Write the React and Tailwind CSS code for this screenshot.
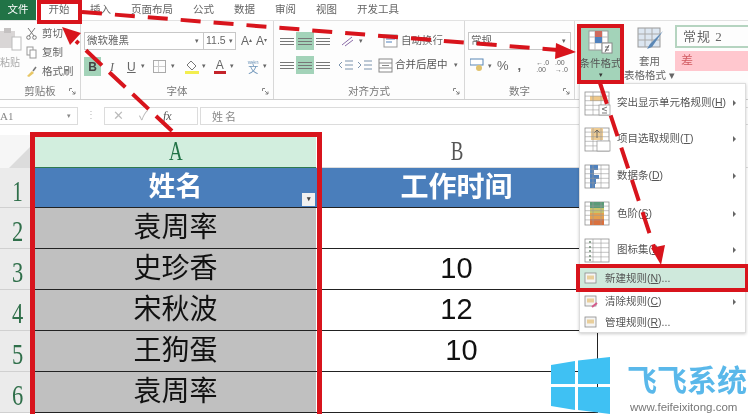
import React from 'react'

const tabs = ['插入', '页面布局', '公式', '数据', '审阅', '视图', '开发工具']

const rows = [
  { n: '2', name: '袁周率', time: '' },
  { n: '3', name: '史珍香', time: '10' },
  { n: '4', name: '宋秋波', time: '12' },
  { n: '5', name: '王狗蛋', time: '10', shift: true },
  { n: '6', name: '袁周率', time: '' },
]

const menuItems = [
  { label: '突出显示单元格规则(', key: 'H', type: 'rule', h: 'h-[36px]' },
  { label: '项目选取规则(', key: 'T', type: 'top', h: 'h-[36px]' },
  { label: '数据条(', key: 'D', type: 'bars', h: 'h-[38px]' },
  { label: '色阶(', key: 'S', type: 'scale', h: 'h-[37px]' },
  { label: '图标集(', key: 'I', type: 'icons', h: 'h-[36px]' },
]

const Lines = ({ w = 14, active }) => (
  <span className={`flex flex-col justify-center gap-[2px] w-[18px] h-[18px] items-center ${active ? 'bg-[#a3d3b9]' : ''}`}>
    <span className="h-px bg-[#777]" style={{ width: w }} />
    <span className="h-px bg-[#777]" style={{ width: w }} />
    <span className="h-px bg-[#777]" style={{ width: w }} />
  </span>
)

const Launcher = () => (
  <svg width="7" height="7" viewBox="0 0 7 7" className="absolute right-[4px] bottom-[4px]">
    <path d="M0.5 3V0.5H3M3 3l3 3M6 3.5V6H3.5" fill="none" stroke="#777" strokeWidth="0.9" />
  </svg>
)

const Group = ({ width, label, children }) => (
  <div className={`relative flex flex-col border-r border-[#d8d8d8] ${width}`}>
    <div className="flex-1 min-h-0">{children}</div>
    <div className="h-[17px] text-center text-[10.5px] leading-[19px] text-[#777]">{label}</div>
  </div>
)

const MiniIcon = ({ type }) => {
  const cells = []
  for (let i = 1; i < 5; i++) cells.push(<path key={'h' + i} d={`M1 ${i * 4.6 + 0.5}H25`} stroke="#9a9a9a" strokeWidth="0.6" />)
  for (let i = 1; i < 3; i++) cells.push(<path key={'v' + i} d={`M${i * 8 + 1} 1V24`} stroke="#9a9a9a" strokeWidth="0.6" />)
  return (
    <svg width="27" height="25" viewBox="0 0 27 25">
      <rect x="1" y="1" width="24" height="23" fill="#fff" stroke="#8f8f8f" strokeWidth="0.8" />
      {type === 'rule' && <rect x="6" y="5" width="13" height="5" fill="#f0c98a" />}
      {type === 'top' && <rect x="7" y="1" width="12" height="12" fill="#eecb93" />}
      {type === 'bars' && (
        <>
          <rect x="6" y="1" width="8" height="5" fill="#4f81bd" />
          <rect x="6" y="6" width="4" height="5" fill="#4f81bd" />
          <rect x="6" y="11" width="9" height="4" fill="#4f81bd" />
          <rect x="6" y="15" width="6" height="5" fill="#4f81bd" />
          <rect x="6" y="20" width="5" height="4" fill="#4f81bd" />
        </>
      )}
      {type === 'scale' && (
        <>
          <rect x="6" y="1" width="14" height="6" fill="#5b9a78" />
          <rect x="6" y="7" width="14" height="5" fill="#c9c46a" />
          <rect x="6" y="12" width="14" height="6" fill="#e5a04e" />
          <rect x="6" y="18" width="14" height="6" fill="#d9713f" />
        </>
      )}
      {cells}
      {type === 'icons' && [4, 9, 13, 18, 22].map((y) => <circle key={y} cx="6" cy={y} r="1" fill="#6c8a72" />)}
      {type === 'rule' && (
        <>
          <rect x="15" y="14" width="11" height="10" fill="#fff" stroke="#8f8f8f" strokeWidth="0.7" />
          <path d="M23 16l-5 2 5 2M18 22h5" fill="none" stroke="#555" strokeWidth="0.8" />
        </>
      )}
      {type === 'top' && (
        <>
          <path d="M13 11V3M10.500 5.500L13 3l2.500 2.500" fill="none" stroke="#555" strokeWidth="0.8" />
          <rect x="13" y="14" width="13" height="10" fill="#fff" stroke="#8f8f8f" strokeWidth="0.7" />
        </>
      )}
    </svg>
  )
}

const SmallRule = ({ pen }) => (
  <svg width="14" height="13" viewBox="0 0 14 13">
    <rect x="1" y="1" width="11" height="10" fill="#f5f5f5" stroke="#8a8a8a" strokeWidth="0.8" />
    <rect x="3" y="3.5" width="7" height="4" fill="#e9cf9c" />
    {pen && <path d="M8 12l5-4" stroke="#d55a8a" strokeWidth="2" />}
  </svg>
)

const MenuItem = ({ item }) => (
  <div className={`flex items-center pl-[4px] pr-[9px] ${item.h}`}>
    <MiniIcon type={item.type} />
    <span className="ml-[6px] flex-1 text-[10.5px] text-[#555]">
      {item.label}<span className="underline">{item.key}</span>)
    </span>
    <span className="w-0 h-0 border-y-[3px] border-y-transparent border-l-[3px] border-l-[#666]" />
  </div>
)

const App = () => {
  return (
    <div className="relative w-[748px] h-[414px] overflow-hidden bg-white blur-[0.3px] font-['Liberation_Sans','Noto_Sans_CJK_SC',sans-serif]">
      {/* Tabs */}
      <div className="flex h-[21px] items-center border-b border-[#e2e2e2] text-[10.5px] text-[#666]">
        <div className="flex h-full w-[36px] items-center justify-center bg-[#217346] text-white">文件</div>
        <div className="w-[46px] text-center">开始</div>
        <div className="ml-[8px] flex gap-[20px]">
          {tabs.map((t) => <span key={t}>{t}</span>)}
        </div>
      </div>

      {/* Ribbon */}
      <div className="flex h-[79px] border-b border-[#cfcfcf] bg-[#fdfdfd] text-[#666]">
        <Group width="w-[81px]" label="剪贴板">
          <div className="flex pt-[4px]">
            <div className="w-[26px] text-[10px] text-[#aaa]">
              <svg width="22" height="25" viewBox="0 0 22 25" className="mt-[2px]">
                <rect x="0" y="4" width="15" height="17" fill="#d9d6d6" />
                <rect x="4" y="1" width="7" height="5" fill="#c4c1c1" />
                <rect x="12" y="10" width="9" height="13" fill="#fff" stroke="#bbb" />
              </svg>
              <div className="mt-[3px] whitespace-nowrap">粘贴</div>
            </div>
            <div className="flex flex-col gap-[3px] pt-[1px] text-[10.5px]">
              <div className="flex items-center gap-[5px]">
                <svg width="11" height="13" viewBox="0 0 11 13"><path d="M2 1l6 8M9 1L3 9" stroke="#777" fill="none" /><circle cx="2.5" cy="10.5" r="1.8" fill="none" stroke="#777" /><circle cx="8.5" cy="10.5" r="1.8" fill="none" stroke="#777" /></svg>
                <span>剪切</span>
              </div>
              <div className="flex items-center gap-[5px]">
                <svg width="11" height="13" viewBox="0 0 11 13"><rect x="1" y="1" width="6" height="8" fill="#fff" stroke="#999" /><rect x="4" y="4" width="6" height="8" fill="#fff" stroke="#999" /></svg>
                <span>复制</span>
              </div>
              <div className="flex items-center gap-[5px]">
                <svg width="11" height="13" viewBox="0 0 11 13"><path d="M1 11l5-5 2 2-5 4z" fill="#e8c766" /><path d="M7 6l3-4" stroke="#777" strokeWidth="1.5" /></svg>
                <span className="whitespace-nowrap">格式刷</span>
              </div>
            </div>
          </div>
          <Launcher />
        </Group>

        <Group width="w-[193px]" label="字体">
          <div className="flex items-center pl-[3px] pt-[11px]">
            <div className="flex h-[18px] w-[120px] items-center justify-between border border-[#c8c8c8] bg-white pl-[2px] pr-[4px] text-[10.5px]">
              <span>微软雅黑</span>
              <span className="text-[7px]">▾</span>
            </div>
            <div className="flex h-[18px] w-[32px] items-center justify-between border border-l-0 border-[#c8c8c8] bg-white px-[2px] text-[10.5px]">
              <span>11.5</span>
              <span className="text-[7px]">▾</span>
            </div>
            <span className="ml-[5px] text-[12px]">A<sup className="text-[6px]">▴</sup></span>
            <span className="ml-[4px] text-[12px]">A<sup className="text-[6px]">▾</sup></span>
          </div>
          <div className="flex items-center pl-[3px] pt-[7px] text-[12px]">
            <span className="flex h-[19px] w-[17px] items-center justify-center bg-[#a3d3b9] font-bold text-[#444]">B</span>
            <span className="ml-[9px] w-[12px] font-['Liberation_Serif'] italic">I</span>
            <span className="ml-[5px] underline">U</span>
            <span className="ml-[5px] text-[7px]">▾</span>
            <span className="ml-[8px] grid h-[13px] w-[13px] grid-cols-2 grid-rows-2 border border-[#aaa]">
              <span className="border-b border-r border-[#ccc]" />
              <span className="border-b border-[#ccc]" />
              <span className="border-r border-[#ccc]" />
              <span />
            </span>
            <span className="ml-[5px] text-[7px]">▾</span>
            <span className="ml-[10px] flex flex-col items-center">
              <svg width="13" height="11" viewBox="0 0 13 11"><path d="M6 1l5 5-4 4-5-5z" fill="#fff" stroke="#777" /></svg>
              <span className="h-[3px] w-[14px] bg-[#f3ee4f]" />
            </span>
            <span className="ml-[3px] text-[7px]">▾</span>
            <span className="ml-[8px] flex flex-col items-center text-[12px] leading-[12px]">A<span className="h-[3px] w-[12px] bg-[#c4232a]" /></span>
            <span className="ml-[4px] text-[7px]">▾</span>
            <span className="ml-[14px] flex flex-col items-center text-[#6c93b8]">
              <span className="text-[6px] leading-[6px]">wén</span>
              <span className="text-[10px] leading-[10px]">文</span>
            </span>
            <span className="ml-[4px] text-[7px]">▾</span>
          </div>
          <Launcher />
        </Group>

        <Group width="w-[191px]" label="对齐方式">
          <div className="flex items-center pl-[4px] pt-[11px]">
            <Lines />
            <Lines active />
            <Lines />
            <svg width="16" height="14" viewBox="0 0 16 14" className="ml-[8px]"><path d="M2 11L12 3M5 12l8-6" stroke="#8a6aa8" /></svg>
            <span className="ml-[3px] text-[7px]">▾</span>
            <svg width="15" height="15" viewBox="0 0 15 15" className="ml-[20px]"><rect x="1" y="1" width="13" height="12" fill="#fff" stroke="#999" /><path d="M3 5h9M3 8h6" stroke="#4f81bd" /></svg>
            <span className="ml-[3px] whitespace-nowrap text-[10.5px]">自动换行</span>
          </div>
          <div className="flex items-center pl-[4px] pt-[6px]">
            <Lines />
            <Lines active />
            <Lines />
            <svg width="16" height="12" viewBox="0 0 16 12" className="ml-[6px]"><path d="M7 2h8M7 6h8M7 10h8M4 3L1 6l3 3" fill="none" stroke="#7b93ad" /></svg>
            <svg width="16" height="12" viewBox="0 0 16 12" className="ml-[3px]"><path d="M7 2h8M7 6h8M7 10h8M1 3l3 3-3 3" fill="none" stroke="#7b93ad" /></svg>
            <svg width="15" height="15" viewBox="0 0 15 15" className="ml-[5px]"><rect x="1" y="1" width="13" height="13" fill="#fff" stroke="#888" /><path d="M1 5h13M1 10h13M4 7.500h7" stroke="#888" /></svg>
            <span className="ml-[2px] whitespace-nowrap text-[10.5px] text-[#555]">合并后居中</span>
            <span className="ml-[6px] text-[7px]">▾</span>
          </div>
          <Launcher />
        </Group>

        <Group width="w-[110px]" label="数字">
          <div className="pl-[3px] pt-[11px]">
            <div className="flex h-[18px] w-[103px] items-center justify-between border border-[#c8c8c8] bg-white pl-[2px] pr-[4px] text-[10.5px]">
              <span>常规</span>
              <span className="text-[7px]">▾</span>
            </div>
          </div>
          <div className="flex items-center pl-[5px] pt-[6px] text-[#666]">
            <svg width="14" height="15" viewBox="0 0 14 15"><rect x="0" y="1" width="13" height="6" fill="#fff" stroke="#5b87b5" /><circle cx="9" cy="10" r="3" fill="#e0c26e" /></svg>
            <span className="ml-[4px] text-[7px]">▾</span>
            <span className="ml-[5px] text-[13px]">%</span>
            <span className="ml-[9px] text-[13px] font-bold">,</span>
            <span className="ml-[15px] text-[7px] leading-[7px]">←.0<br />.00</span>
            <span className="ml-[6px] text-[7px] leading-[7px]">.00<br />→.0</span>
          </div>
          <Launcher />
        </Group>

        <div className="flex flex-1 pl-[2px] pt-[4px]">
          <div className="flex h-[59px] w-[47px] flex-col items-center bg-[#a3d3b9] pt-[5px] text-[10.5px] leading-[12px]">
            <svg width="25" height="25" viewBox="0 0 25 25">
              <rect x="1" y="1" width="19" height="19" fill="#fff" stroke="#999" />
              <path d="M7 1v19M14 1v19M1 7h19M1 13h19" stroke="#bbb" />
              <rect x="7" y="1" width="7" height="6" fill="#cf6a5d" />
              <rect x="7" y="7" width="7" height="6" fill="#4f81bd" />
              <rect x="14" y="13" width="10" height="10" fill="#fff" stroke="#888" />
              <path d="M17 17h4M17 20h4M21 15l-4 7" stroke="#444" strokeWidth="0.8" fill="none" />
            </svg>
            <span className="mt-[2px] whitespace-nowrap text-[#555]">条件格式</span>
            <span className="text-[7px] text-[#333]">▾</span>
          </div>
          <div className="flex w-[51px] flex-col items-center pt-[1px] text-[10.5px] leading-[14px]">
            <svg width="28" height="25" viewBox="0 0 28 25">
              <rect x="2" y="2" width="22" height="19" fill="#dce6f1" stroke="#999" />
              <path d="M2 8h22M2 14h22M9 2v19M16 2v19" stroke="#aaa" />
              <path d="M27 5L14 18l-3 5 5-2z" fill="#5b87b5" />
            </svg>
            <span className="mt-[3px]">套用</span>
            <span className="whitespace-nowrap">表格格式 ▾</span>
          </div>
          <div className="flex flex-1 flex-col">
            <div className="flex h-[23px] items-center border-2 border-r-0 border-[#b5d4c0] pl-[6px] font-['Liberation_Serif','Noto_Sans_CJK_SC',serif] text-[13px] tracking-[1px] text-[#666]">常规 2</div>
            <div className="mt-[3px] flex h-[20px] items-center bg-[#ffc7ce] pl-[6px] text-[12px] text-[#d05a60]">差</div>
          </div>
        </div>
      </div>

      {/* Formula bar */}
      <div className="mt-[7px] flex h-[18px] items-stretch text-[#888]">
        <div className="flex w-[78px] items-center justify-between border-y border-r border-[#dcdcdc] pr-[6px] font-['Liberation_Serif'] text-[11px]">
          <span>A1</span>
          <span className="text-[7px]">▾</span>
        </div>
        <div className="w-[26px] text-center text-[10px] leading-[16px] text-[#bbb]">⋮</div>
        <div className="flex w-[94px] items-center border border-[#dcdcdc] pl-[8px] text-[#bbb]">
          <span className="text-[13px]">✕</span>
          <span className="ml-[15px] text-[13px]">✓</span>
          <span className="ml-[15px] font-['Liberation_Serif'] text-[12px] italic text-[#555]">fx</span>
        </div>
        <div className="ml-[2px] flex flex-1 items-center border-y border-l border-[#dcdcdc] pl-[11px] font-['Noto_Sans_CJK_SC'] text-[11px] tracking-[2px]">姓名</div>
      </div>

      {/* Sheet */}
      <div className="mt-[10px] grid grid-cols-[35px_281px_282px_1fr]">
        <div className="relative h-[33px] bg-[#f6f6f6]">
          <span className="absolute bottom-0 right-[1px] h-0 w-0 border-b-[25px] border-l-[25px] border-b-[#dcdcdc] border-l-transparent" />
        </div>
        <div className="flex h-[33px] items-center justify-center border-b border-[#2f7a4f] bg-[#d2eede] font-['Liberation_Serif'] text-[27px] text-[#217346]">
          <span className="inline-block scale-x-[0.7]">A</span>
        </div>
        <div className="flex h-[33px] items-center justify-center border-b border-[#ddd] font-['Liberation_Serif'] text-[27px] text-[#555]">
          <span className="inline-block scale-x-[0.7]">B</span>
        </div>
        <div className="h-[33px] border-b border-[#ddd]" />

        <div className="flex h-[40px] items-center justify-center border-b border-[#d0d0d0] bg-[#ebebeb] pt-[5px] font-['Liberation_Serif'] text-[30px] text-[#2f6f4a]">
          <span className="inline-block scale-x-[0.7]">1</span>
        </div>
        <div className="relative flex h-[40px] items-center justify-center border-b border-[#222] bg-[#4a7ebb] text-[27px] font-bold text-white">
          <span>姓名</span>
          <span className="absolute bottom-[1px] right-[1px] flex h-[13px] w-[13px] items-center justify-center bg-[#f0f0f0] text-[7px] text-[#444]">▾</span>
        </div>
        <div className="flex h-[40px] items-center justify-center border-b border-r border-[#222] bg-[#4a7ebb] text-[28px] font-bold text-white">工作时间</div>
        <div className="h-[40px]" />

        {rows.map((r) => (
          <React.Fragment key={r.n}>
            <div className="flex h-[41px] items-center justify-center border-b border-[#d0d0d0] bg-[#ebebeb] pt-[5px] font-['Liberation_Serif'] text-[30px] text-[#2f6f4a]">
              <span className="inline-block scale-x-[0.75]">{r.n}</span>
            </div>
            <div className="flex h-[41px] items-center justify-center border-b border-[#222] bg-[#c0c0c0] text-[28px] text-[#111]">{r.name}</div>
            <div className={`flex h-[41px] items-center justify-center border-b border-r border-[#222] text-[29px] text-[#111] ${r.shift ? 'pl-[10px]' : ''}`}>{r.time}</div>
            <div className="h-[41px]" />
          </React.Fragment>
        ))}
      </div>

      {/* Dropdown menu */}
      <div className="absolute left-[579px] top-[83px] h-[250px] w-[167px] border border-[#ddd] bg-white pt-[1px] shadow-[0_1px_3px_rgba(0,0,0,0.2)]">
        {menuItems.map((item) => <MenuItem key={item.key} item={item} />)}
        <div className="absolute inset-x-0 top-[182px] flex h-[25px] items-center bg-[#cfe9dc] pl-[4px] text-[10.5px] text-[#555]">
          <SmallRule />
          <span className="ml-[7px]">新建规则(<span className="underline">N</span>)...</span>
        </div>
        <div className="absolute inset-x-0 top-[207px] flex h-[21px] items-center pl-[4px] pr-[9px] text-[10.5px] text-[#555]">
          <SmallRule pen />
          <span className="ml-[7px] flex-1">清除规则(<span className="underline">C</span>)</span>
          <span className="h-0 w-0 border-y-[3px] border-l-[3px] border-y-transparent border-l-[#666]" />
        </div>
        <div className="absolute inset-x-0 top-[228px] flex h-[21px] items-center pl-[4px] text-[10.5px] text-[#555]">
          <SmallRule />
          <span className="ml-[7px]">管理规则(<span className="underline">R</span>)...</span>
        </div>
      </div>

      {/* Red highlight boxes */}
      <div className="absolute left-[37px] top-0 h-[24px] w-[45px] border-[4px] border-[#d8141c]" />
      <div className="absolute left-[577px] top-[24px] h-[60px] w-[47px] border-[4px] border-[#d8141c]" />
      <div className="absolute left-[576px] top-[264px] h-[28px] w-[172px] border-[4px] border-r-[3px] border-[#d8141c]" />
      <div className="absolute left-[30px] top-[132px] h-[290px] w-[292px] border-[5px] border-[#d8141c]" />

      {/* Dashed arrows */}
      <svg width="748" height="414" viewBox="0 0 748 414" className="pointer-events-none absolute left-0 top-0">
        <g stroke="#d8141c" strokeWidth="4" fill="none" strokeDasharray="20 13">
          <path d="M82 12L558 50" />
          <path d="M172 131L76 41" strokeDasharray="22 10" />
          <path d="M600 83L655 250" strokeDasharray="22 12" />
        </g>
        <path d="M576 52L556 43L555 59Z" fill="#d8141c" />
        <path d="M62 27L81 33L70 45Z" fill="#d8141c" />
        <path d="M661 265L651 248L665 245Z" fill="#d8141c" />
      </svg>

      {/* Watermark */}
      <svg width="60" height="57" viewBox="0 0 60 57" className="absolute left-[551px] top-[357px]">
        <path d="M0 8L24 4V27H0ZM27 3.500L59 0V27H27ZM0 30H24V53L0 49ZM27 30H59V57L27 53Z" fill="#3fc1f3" />
      </svg>
      <div className="absolute left-[627px] top-[362px] w-[121px] text-[30px] font-bold leading-[38px] whitespace-nowrap text-[#5ab8ea]">飞飞系统</div>
      <div className="absolute left-[630px] top-[400px] text-[11.5px] leading-[14px] text-[#777]">www.feifeixitong.com</div>
    </div>
  )
}

export default App
